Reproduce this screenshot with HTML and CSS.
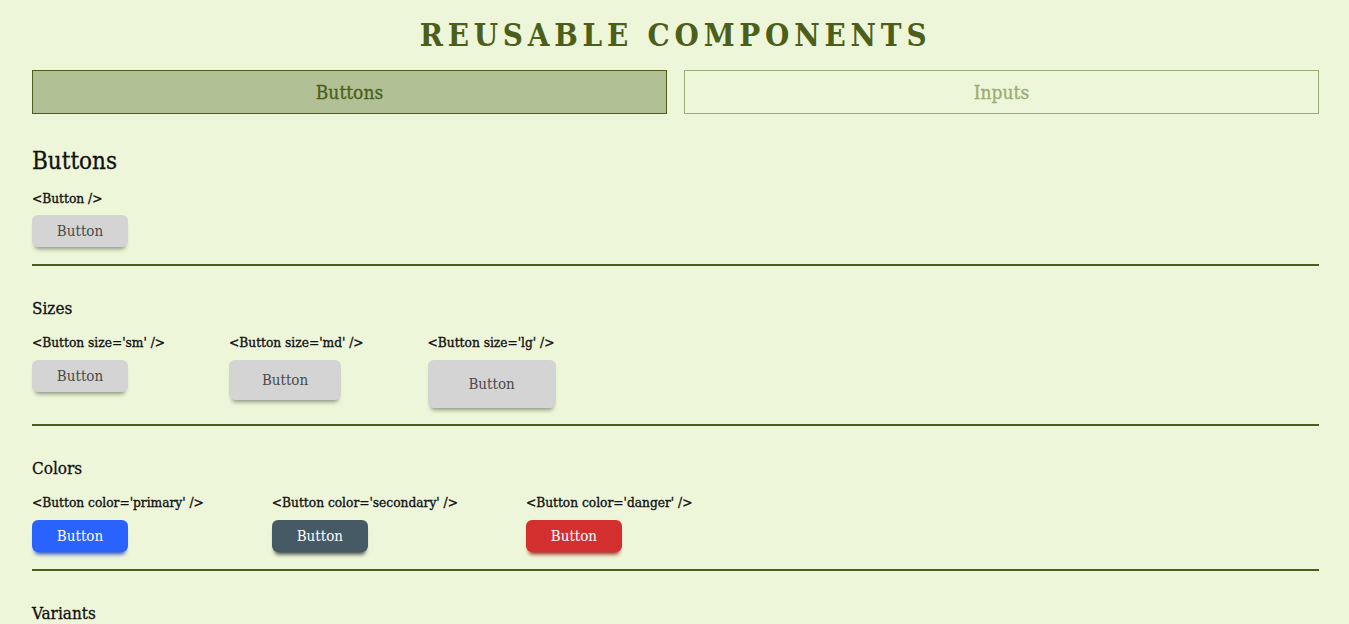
FILE: index.html
```html
<!DOCTYPE html>
<html lang="en">
<head>
<meta charset="utf-8">
<title>Reusable Components</title>
<link rel="stylesheet" href="styles.css">
</head>
<body>
<div class="page">
  <h1 class="title">REUSABLE COMPONENTS</h1>
  <div class="tabs">
    <button class="tab tab-active">Buttons</button>
    <button class="tab">Inputs</button>
  </div>
  <h2 class="page-heading">Buttons</h2>
  <section class="section section-first">
    <div class="demo">
      <div class="code">&lt;Button /&gt;</div>
      <button class="btn">Button</button>
    </div>
  </section>
  <hr class="rule">
  <section class="section">
    <h3 class="section-title">Sizes</h3>
    <div class="row">
      <div class="demo">
        <div class="code">&lt;Button size='sm' /&gt;</div>
        <button class="btn btn-sm">Button</button>
      </div>
      <div class="demo">
        <div class="code">&lt;Button size='md' /&gt;</div>
        <button class="btn btn-md">Button</button>
      </div>
      <div class="demo">
        <div class="code">&lt;Button size='lg' /&gt;</div>
        <button class="btn btn-lg">Button</button>
      </div>
    </div>
  </section>
  <hr class="rule rule-tight">
  <section class="section">
    <h3 class="section-title">Colors</h3>
    <div class="row row-colors">
      <div class="demo">
        <div class="code">&lt;Button color='primary' /&gt;</div>
        <button class="btn btn-primary">Button</button>
      </div>
      <div class="demo">
        <div class="code">&lt;Button color='secondary' /&gt;</div>
        <button class="btn btn-secondary">Button</button>
      </div>
      <div class="demo">
        <div class="code">&lt;Button color='danger' /&gt;</div>
        <button class="btn btn-danger">Button</button>
      </div>
    </div>
  </section>
  <hr class="rule">
  <section class="section">
    <h3 class="section-title">Variants</h3>
  </section>
</div>
</body>
</html>
```
FILE: styles.css
```css
html, body {
  margin: 0;
  padding: 0;
  background: #eef6d9;
}
body {
  font-family: "DejaVu Serif", "Liberation Serif", serif;
  font-stretch: condensed;
  color: #111;
}
.page {
  padding: 0 30px 0 32px;
}
.title {
  margin: 0;
  padding-top: 15px;
  height: 40px;
  text-align: center;
  font-size: 31px;
  font-weight: 700;
  letter-spacing: 4.8px;
  color: #4b5e1a;
  line-height: 40px;
}
.tabs {
  display: flex;
  gap: 17px;
  margin-top: 15px;
}
.tab {
  flex: 1;
  height: 44px;
  border: 1px solid #9aab73;
  background: transparent;
  color: #9aab73;
  font-family: inherit;
  font-stretch: condensed;
  font-size: 19px;
  -webkit-text-stroke: 0.3px currentColor;
  cursor: pointer;
}
.tab-active {
  background: #b2c095;
  border-color: #4b5e1a;
  color: #4b5e1a;
}
.page-heading {
  margin: 33px 0 0;
  font-size: 24px;
  font-weight: 400;
  line-height: 28px;
  -webkit-text-stroke: 0.3px currentColor;
}
.section-first {
  padding-top: 14px;
}
.section-title {
  margin: 31px 0 0;
  font-size: 17px;
  font-weight: 400;
  line-height: 22px;
  -webkit-text-stroke: 0.3px currentColor;
}
.row {
  display: flex;
  gap: 64px;
  align-items: flex-start;
  margin-top: 14px;
}
.row-colors {
  gap: 68px;
}
.code {
  font-size: 13.6px;
  line-height: 18px;
  font-weight: 400;
  -webkit-text-stroke: 0.35px currentColor;
  margin-bottom: 9px;
}
.section-first .code {
  margin-bottom: 8px;
}
.btn {
  display: block;
  width: 96px;
  height: 32px;
  border: none;
  border-radius: 6px;
  background: #d4d4d4;
  color: #4a4a4a;
  font-family: inherit;
  font-stretch: condensed;
  font-size: 15px;
  box-shadow: 0 5px 4px -3px rgba(0, 0, 0, 0.4);
  cursor: pointer;
}
.btn-md {
  width: 112px;
  height: 40px;
}
.btn-lg {
  width: 128px;
  height: 48px;
}
.btn-primary {
  background: #2962ff;
  color: #fff;
  box-shadow: 0 5px 4px -3px #1c45c9;
}
.btn-secondary {
  background: #455a64;
  color: #fff;
  box-shadow: 0 5px 4px -3px #27343a;
}
.btn-danger {
  background: #d32f2f;
  color: #fff;
  box-shadow: 0 5px 4px -3px #9a1515;
}
.rule {
  margin: 17px 0 0;
  border: none;
  border-top: 2px solid #4b5e1a;
  height: 0;
}
.rule-tight {
  margin-top: 16px;
}
```
